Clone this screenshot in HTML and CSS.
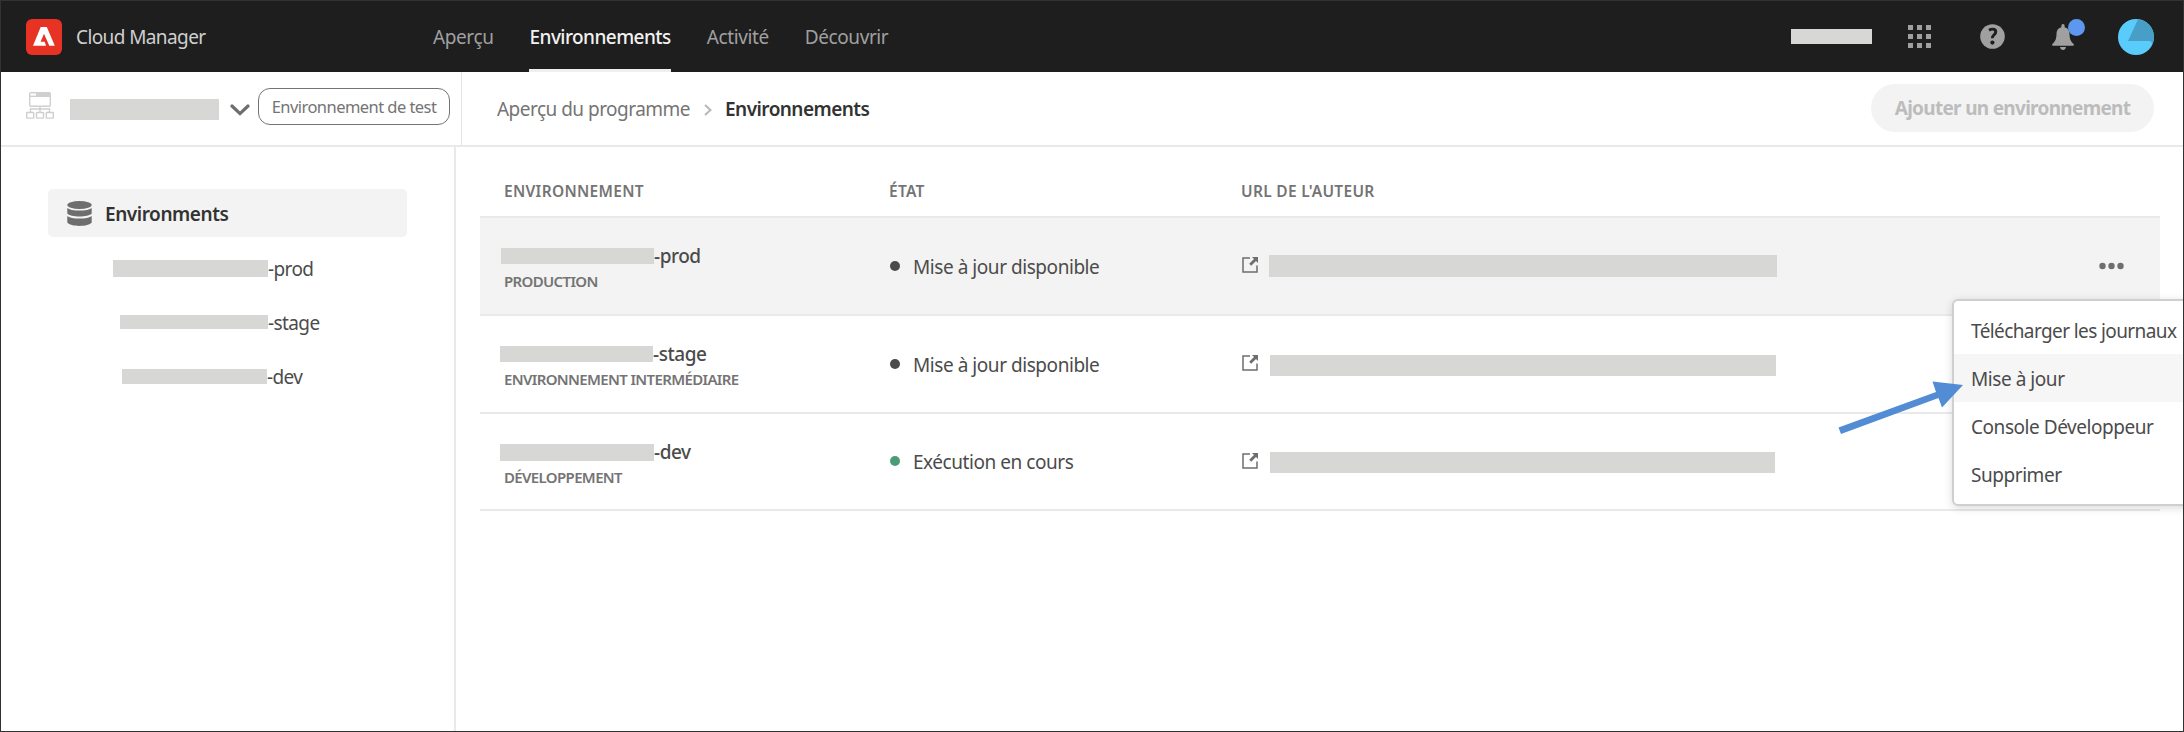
FILE: index.html
```html
<!DOCTYPE html>
<html lang="fr">
<head>
<meta charset="utf-8">
<title>Cloud Manager</title>
<link rel="stylesheet" href="styles.css">
</head>
<body>
<div class="app">
  <header class="topbar">
    <svg class="logo" viewBox="0 0 36 36"><rect width="36" height="36" rx="6" fill="#e63323"/><path d="M14.700 8h6.100l8 18.800h-5.500L18 14.800l-3.400 8h4l1.500 4H7z" fill="#fff"/></svg>
    <span class="product">Cloud Manager</span>
    <nav class="nav">
      <a class="nav-item">Aperçu</a>
      <a class="nav-item active">Environnements</a>
      <a class="nav-item">Activité</a>
      <a class="nav-item">Découvrir</a>
    </nav>
    <div class="tools">
      <span class="mask org"></span>
      <svg class="apps" viewBox="0 0 23 23" fill="#a0a0a0"><path d="M0 0h5v5H0zM9 0h5v5H9zM18 0h5v5h-5zM0 9h5v5H0zM9 9h5v5H9zM18 9h5v5h-5zM0 18h5v5H0zM9 18h5v5H9zM18 18h5v5h-5z"/></svg>
      <svg class="help" viewBox="0 0 25 25"><circle cx="12.500" cy="12.500" r="12.300" fill="#a0a0a0"/><path d="M9 6.200c4-2.200 7.300-.6 6.600 2.400-.5 2.200-3.400 2.600-3.300 5.600" fill="none" stroke="#1e1e1e" stroke-width="2.900"/><circle cx="12.400" cy="18.600" r="2.100" fill="#1e1e1e"/></svg>
      <span class="bell-wrap"><svg class="bell" viewBox="0 0 22 26" fill="#a0a0a0"><path d="M11 0c1 0 1.600.8 1.600 1.800v1.400c3.700.9 4.800 3.600 4.900 7 .2 5.500 1.700 7.500 3.900 9.600.8.900.6 2-.4 2H1c-1 0-1.200-1.100-.4-2 2.200-2.100 3.700-4.100 3.900-9.600.1-3.400 1.200-6.100 4.900-7V1.800C9.400.8 10 0 11 0zM8 23h6c-.3 1.800-1.500 3-3 3s-2.700-1.200-3-3z"/></svg><span class="badge"></span></span>
      <svg class="avatar" viewBox="0 0 36 36"><circle cx="18" cy="18" r="18" fill="#5accfc"/><path d="M20 .2A18 18 0 0 1 34.300 25.600C34 23 33 22 31 22H10z" fill="#479ec6"/></svg>
    </div>
  </header>

  <div class="subbar">
    <div class="program">
      <svg class="tree" viewBox="0 0 28 27" fill="none" stroke="#cfcfcf" stroke-width="1.400"><rect x="3.700" y=".7" width="20.600" height="13.600" rx="1"/><path d="M4 4.300h20"/><path d="M10 2.500h14" stroke-width="3.600"/><path d="M14 14v6M4.500 20v-3h19v3"/><rect x=".7" y="20.500" width="7" height="5.600" rx=".6"/><rect x="10.500" y="20.500" width="7" height="5.600" rx=".6"/><rect x="20.300" y="20.500" width="7" height="5.600" rx=".6"/></svg>
      <span class="mask program-name"></span>
      <svg class="chevron" viewBox="0 0 20 12"><path d="M2 2l8 7.600L18 2" fill="none" stroke="#6e6e6e" stroke-width="3.200" stroke-linecap="round"/></svg>
      <span class="pill">Environnement de test</span>
    </div>
    <div class="crumbs">
      <span class="crumb">Aperçu du programme</span>
      <svg class="sep" viewBox="0 0 8 12"><path d="M1 1l5.500 5L1 11" fill="none" stroke="#b8b8b8" stroke-width="2"/></svg>
      <strong class="crumb-current">Environnements</strong>
      <button class="add" disabled>Ajouter un environnement</button>
    </div>
  </div>

  <div class="body">
    <aside class="sidebar">
      <div class="side-head">
        <svg class="db" viewBox="0 0 25 25" fill="#6e6e6e"><ellipse cx="12.500" cy="4" rx="12.200" ry="4"/><path d="M.3 7c3 3.400 21.400 3.400 24.400 0v5.500c-3 4-21.400 4-24.400 0zM.3 15c3 3.400 21.400 3.400 24.400 0v6.500c-3 4.500-21.400 4.500-24.400 0z"/></svg>
        <span>Environments</span>
      </div>
      <div class="side-item"><span class="mask side-prod"></span><span>-prod</span></div>
      <div class="side-item"><span class="mask side-stage"></span><span>-stage</span></div>
      <div class="side-item"><span class="mask side-dev"></span><span>-dev</span></div>
    </aside>

    <main class="table">
      <div class="row head"><span>Environnement</span><span>État</span><span>URL de l'auteur</span></div>
      <div class="row selected">
        <div class="env"><div class="name"><span class="mask name-prod"></span>-prod</div><div class="kind">Production</div></div>
        <div class="state"><i class="dot"></i><span>Mise à jour disponible</span></div>
        <div class="url"><svg class="ext" viewBox="0 0 16 16"><path d="M8 1H1v14h14V8.500" fill="none" stroke="#6e6e6e" stroke-width="1.500"/><path d="M10 0h6v6l-2-2-4.800 4.800-2-2L12 2z" fill="#6e6e6e"/></svg><span class="mask url-prod"></span></div>
        <svg class="more" viewBox="0 0 25 8" fill="#6e6e6e"><circle cx="3.500" cy="4" r="3.200"/><circle cx="12.500" cy="4" r="3.200"/><circle cx="21.500" cy="4" r="3.200"/></svg>
      </div>
      <div class="row">
        <div class="env"><div class="name"><span class="mask name-stage"></span>-stage</div><div class="kind">Environnement intermédiaire</div></div>
        <div class="state"><i class="dot"></i><span>Mise à jour disponible</span></div>
        <div class="url"><svg class="ext" viewBox="0 0 16 16"><path d="M8 1H1v14h14V8.500" fill="none" stroke="#6e6e6e" stroke-width="1.500"/><path d="M10 0h6v6l-2-2-4.800 4.800-2-2L12 2z" fill="#6e6e6e"/></svg><span class="mask url-stage"></span></div>
      </div>
      <div class="row last">
        <div class="env"><div class="name"><span class="mask name-dev"></span>-dev</div><div class="kind">Développement</div></div>
        <div class="state"><i class="dot running"></i><span>Exécution en cours</span></div>
        <div class="url"><svg class="ext" viewBox="0 0 16 16"><path d="M8 1H1v14h14V8.500" fill="none" stroke="#6e6e6e" stroke-width="1.500"/><path d="M10 0h6v6l-2-2-4.800 4.800-2-2L12 2z" fill="#6e6e6e"/></svg><span class="mask url-dev"></span></div>
      </div>
    </main>
  </div>

  <div class="menu">
    <div class="menu-item long">Télécharger les journaux</div>
    <div class="menu-item hover">Mise à jour</div>
    <div class="menu-item">Console Développeur</div>
    <div class="menu-item">Supprimer</div>
  </div>
  <svg class="arrow" viewBox="0 0 126 54" fill="#528cd4"><path d="M1.500 47.500L99 12 95.500 1.500 126 5 105 27.500 101.500 18 4 54z"/></svg>
</div>
</body>
</html>
```
FILE: styles.css
```css
* { box-sizing: border-box; }
body {
  margin: 0;
  background: #fff;
  font-family: "Noto Sans", "Open Sans", sans-serif;
  font-size: 19px;
  letter-spacing: -0.45px;
  line-height: 26px;
  color: #4b4b4b;
}
svg { display: block; flex: none; }
.app {
  position: relative;
  width: 2184px;
  height: 732px;
  overflow: hidden;
  border: 1px solid #323232;
  display: flex;
  flex-direction: column;
}
.mask { display: block; flex: none; background: #d7d7d5; }

/* Top bar */
.topbar {
  flex: none;
  height: 71px;
  padding: 0 29px 0 25px;
  background: #1e1e1e;
  display: flex;
  align-items: center;
}
.logo { width: 36px; height: 36px; }
.product { width: 356px; padding-left: 14px; color: #d0d0d0; white-space: nowrap; letter-spacing: -0.6px; }
.nav { align-self: stretch; margin-left: 15px; display: flex; gap: 36px; }
.nav-item { display: flex; align-items: center; color: #a0a0a0; letter-spacing: -0.4px; }
.nav-item.active { color: #f2f2f2; font-weight: 500; letter-spacing: -0.55px; border-top: 3px solid transparent; border-bottom: 3px solid #efefef; }
.tools { margin-left: auto; display: flex; align-items: center; }
.org { width: 81px; height: 15px; margin-right: 36px; }
.apps { width: 23px; height: 23px; margin-right: 49px; }
.help { width: 25px; height: 25px; margin-right: 47px; }
.bell-wrap { position: relative; margin-right: 44px; }
.bell { width: 22px; height: 26px; }
.badge { position: absolute; left: 16px; top: -5px; width: 17px; height: 17px; border-radius: 50%; background: #5e98ee; }
.avatar { width: 36px; height: 36px; }

/* Program bar */
.subbar { flex: none; height: 75px; border-bottom: 2px solid #e9e9e9; display: flex; }
.program { width: 461px; border-right: 1px solid #e4e4e4; padding-left: 25px; display: flex; align-items: flex-start; }
.tree { width: 28px; height: 27px; margin-top: 20px; }
.program-name { width: 149px; height: 21px; margin: 27px 11px 0 16px; }
.chevron { width: 20px; height: 12px; margin-top: 32px; }
.pill {
  flex: none;
  width: 192px;
  height: 37px;
  margin: 16px 0 0 8px;
  border: 1px solid #747474;
  border-radius: 12px;
  font-size: 16.5px;
  letter-spacing: -0.55px;
  line-height: 36px;
  color: #747474;
  text-align: center;
}
.crumbs { flex: 1; padding: 0 29px 2px 35px; display: flex; align-items: center; }
.crumb { color: #747474; letter-spacing: -0.52px; }
.sep { width: 8px; height: 12px; margin: 4px 13px 0 14px; }
.crumb, .crumb-current { padding-top: 3px; }
.crumb-current { font-weight: 600; color: #323232; letter-spacing: -0.55px; }
.add {
  width: 283px;
  height: 48px;
  margin-left: auto;
  border: 0;
  border-radius: 24px;
  padding: 0;
  background: #f3f3f3;
  color: #bcbcbc;
  font: 700 19px/48px "Noto Sans", "Open Sans", sans-serif;
  letter-spacing: -0.7px;
}

/* Sidebar */
.body { flex: 1; display: flex; }
.sidebar { width: 455px; border-right: 2px solid #e9e9e9; padding: 42px 47px 0; }
.side-head {
  height: 48px;
  margin-bottom: 4px;
  padding-left: 19px;
  border-radius: 5px;
  background: #f3f3f3;
  color: #323232;
  font-weight: 600;
  display: flex;
  align-items: center;
  gap: 13px;
}
.side-head span { padding-top: 2px; }
.db { width: 25px; height: 25px; }
.side-item { height: 54px; display: flex; align-items: center; letter-spacing: -0.6px; }
.side-item span:last-child { padding-top: 1px; }
.side-prod { width: 155px; height: 17px; margin-left: 65px; }
.side-stage { width: 148px; height: 14px; margin-left: 72px; }
.side-dev { width: 145px; height: 15px; margin-left: 74px; }

/* Table */
.table { width: 1680px; margin-left: 24px; }
.row {
  height: 98px;
  border-bottom: 2px solid #e9e9e9;
  display: grid;
  grid-template-columns: 410px 352px 1fr 61px;
}
.row.last { height: 97px; }
.row.selected { background: #f3f3f3; }
.row.head {
  height: 71px;
  padding: 31px 0 0 24px;
  grid-template-columns: 385px 352px 1fr;
  color: #747474;
  font-size: 15.5px;
  font-weight: 600;
  text-transform: uppercase;
  letter-spacing: 0.3px;
}
.env { padding-top: 25px; }
.name { display: flex; align-items: center; height: 26px; font-weight: 500; }
.name-prod { width: 153px; height: 16px; margin-left: 21px; }
.name-stage { width: 153px; height: 16px; margin-left: 20px; }
.name-dev { width: 154px; height: 17px; margin-left: 20px; }
.kind { padding-left: 24px; font-size: 15px; font-weight: 600; letter-spacing: -0.65px; line-height: 25px; color: #747474; text-transform: uppercase; }
.state { display: flex; align-items: center; padding-bottom: 1px; }
.state span { padding-top: 2px; }
.dot { width: 10px; height: 10px; margin-right: 13px; border-radius: 50%; background: #4b4b4b; }
.running { background: #4c9b78; }
.url { display: flex; align-items: center; }
.ext { width: 16px; height: 16px; margin: 0 11px 2px 0; }
.url-prod { width: 508px; height: 22px; }
.url-stage { width: 506px; height: 21px; margin: 2px 0 0 1px; }
.url-dev { width: 505px; height: 21px; margin: 2px 0 0 1px; }
.more { width: 25px; height: 8px; align-self: center; }

/* Row action menu */
.menu {
  position: absolute;
  left: 1951px;
  top: 298px;
  width: 260px;
  height: 207px;
  padding: 5px 0;
  border: 2px solid #cfcfcf;
  border-radius: 6px;
  background: #fff;
  box-shadow: 0 2px 8px rgba(0, 0, 0, 0.15);
}
.menu-item { height: 48px; padding-left: 17px; line-height: 50px; white-space: nowrap; }
.long { letter-spacing: -0.6px; }
.hover { background: #f6f6f6; }
.arrow { position: absolute; left: 1836px; top: 379px; width: 126px; height: 54px; }
```
